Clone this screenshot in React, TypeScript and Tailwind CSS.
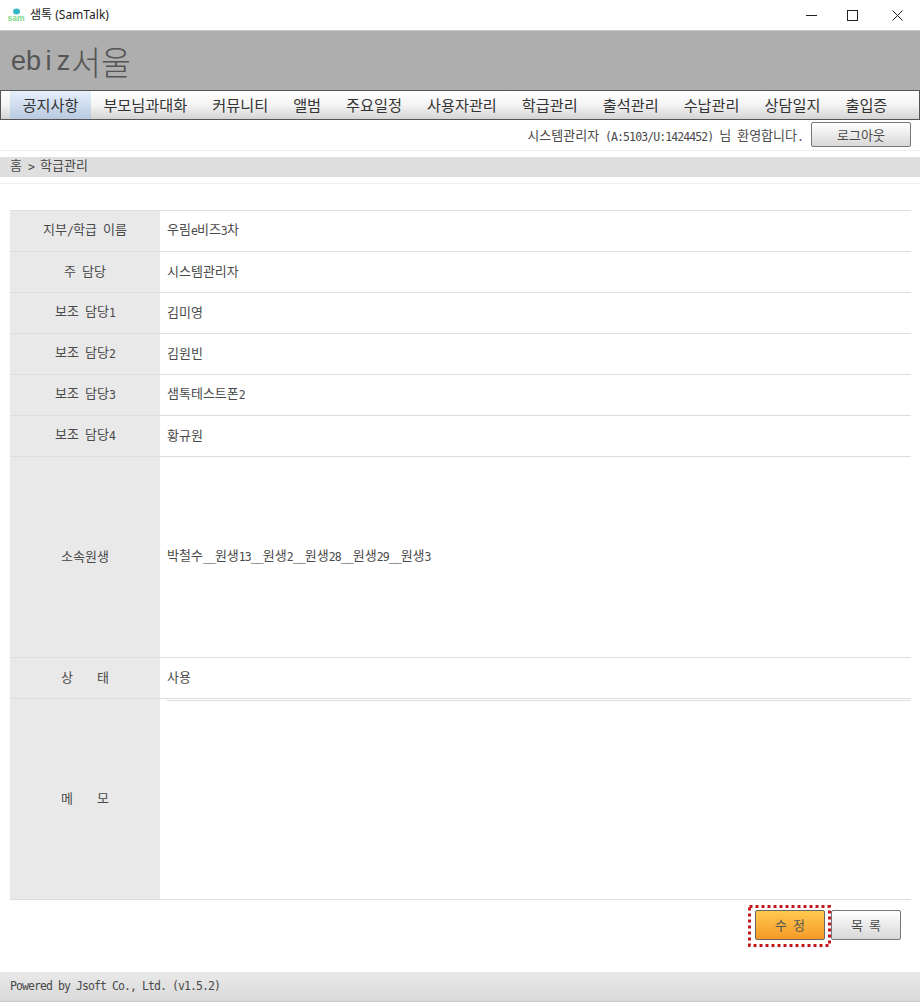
import React from "react";

const KR = "font-['Noto_Sans_CJK_KR',monospace]";

function L({ children }: { children: React.ReactNode }) {
  return <span className="font-['DejaVu_Sans_Mono','Noto_Sans_CJK_KR',monospace] text-[11.5px] tracking-[-0.92px] [word-spacing:0px] align-[-1px]">{children}</span>;
}

const navItems = ["공지사항", "부모님과대화", "커뮤니티", "앨범", "주요일정", "사용자관리", "학급관리", "출석관리", "수납관리", "상담일지", "출입증"];

function Row({ label, h = "h-[41px]", children }: { label: React.ReactNode; h?: string; children?: React.ReactNode }) {
  return (
    <div className={`flex ${h} border-t border-[#dddddd]`}>
      <div className="w-[150px] shrink-0 bg-[#e9e9e9] flex items-center justify-center whitespace-pre text-[13px] text-[#4a4a4a] pb-[3px]"><span>{label}</span></div>
      <div className="flex-1 pl-[7px] flex items-center text-[13px] text-[#4a4a4a] pb-[3px]"><span>{children}</span></div>
    </div>
  );
}

export default function App() {
  return (
    <div className={`w-[920px] h-[1002px] bg-white flex flex-col overflow-hidden [word-spacing:3.1px] ${KR}`}>
      {/* title bar */}
      <div className="h-[30px] flex items-center shrink-0">
        <svg width="18" height="15" viewBox="0 0 18 15" className="ml-[7px]">
          <ellipse cx="9.5" cy="3.5" rx="3.5" ry="3" fill="#35b8c4" />
          <text x="0.5" y="13" fontSize="8.5" fontWeight="700" fill="#7ed98a" fontFamily="Liberation Sans">sam</text>
        </svg>
        <span className="ml-[5px] text-[12px] text-[#222] [word-spacing:0px] font-['Noto_Sans','Noto_Sans_CJK_KR',sans-serif]">샘톡 (SamTalk)</span>
        <div className="ml-auto flex items-center">
          <svg width="11" height="11" viewBox="0 0 11 11" className="mr-[30px]"><path d="M0 5.5h11" stroke="#222" strokeWidth="1" /></svg>
          <svg width="11" height="11" viewBox="0 0 11 11" className="mr-[34px]"><rect x="0.5" y="0.5" width="10" height="10" fill="none" stroke="#222" strokeWidth="1" /></svg>
          <svg width="11" height="11" viewBox="0 0 11 11" className="mr-[17px]"><path d="M0.5 0.5l10 10M10.5 0.5l-10 10" stroke="#222" strokeWidth="1" /></svg>
        </div>
      </div>

      {/* banner */}
      <div className="h-[60px] shrink-0 bg-[#aeaeae] border-t border-[#c8c8c8] flex items-center pl-[11px] pt-[1px] text-[32.6px] font-light text-[#555] leading-none">
        <span className="font-['Liberation_Sans',sans-serif] text-[27px] flex">
          <span className="w-[15px] text-center">e</span>
          <span className="w-[15px] text-center">b</span>
          <span className="w-[15px] text-center">i</span>
          <span className="w-[15px] text-center">z</span>
        </span>
        서울
      </div>

      {/* nav */}
      <div className="h-[30px] shrink-0 flex pl-[9px] border border-[#555] bg-gradient-to-b from-white via-[#f4f4f4] to-[#d4d4d4]">
        {navItems.map((n, i) => (
          <div
            key={n}
            className={`px-[12.5px] pb-[2px] flex items-center text-[15.2px] text-[#333] whitespace-nowrap ${i === 0 ? "bg-gradient-to-b from-[#e6f0fc] to-[#b9c9df]" : ""}`}
          >
            {n}
          </div>
        ))}
      </div>

      {/* welcome */}
      <div className="h-[31px] shrink-0 border-b border-[#eeeeee] flex items-start justify-end pr-[9px] pt-[2px] gap-[8px]">
        <span className="text-[13px] text-[#4a4a4a] leading-[25px] whitespace-pre">시스템관리자 <L>(A:5103/U:1424452)</L> 님 환영합니다<L>.</L></span>
        <button className="w-[100px] h-[25px] rounded-[2px] border border-[#777] bg-gradient-to-b from-white to-[#d8d8d8] text-[13px] text-[#4a4a4a]">로그아웃</button>
      </div>

      {/* breadcrumb */}
      <div className="mt-[6px] h-[20px] shrink-0 bg-[#dfdfdf] flex items-center pl-[10px] pb-[3px] text-[13px] text-[#4a4a4a] whitespace-pre"><span>홈 <L>&gt;</L> 학급관리</span></div>
      <div className="mt-[6px] h-[1px] shrink-0 bg-[#eeeeee]" />

      {/* table */}
      <div className="ml-[10px] mr-[9px] mt-[26px] shrink-0 border-b border-[#dddddd]">
        <Row label={<>지부<L>/</L>학급 이름</>}>우림<L>e</L>비즈<L>3</L>차</Row>
        <Row label="주 담당">시스템관리자</Row>
        <Row label={<>보조 담당<L>1</L></>}>김미영</Row>
        <Row label={<>보조 담당<L>2</L></>}>김원빈</Row>
        <Row label={<>보조 담당<L>3</L></>}>샘톡테스트폰<L>2</L></Row>
        <Row label={<>보조 담당<L>4</L></>}>황규원</Row>
        <Row label="소속원생" h="h-[201px]">
          박철수<L>__</L>원생<L>13__</L>원생<L>2__</L>원생<L>28__</L>원생<L>29__</L>원생<L>3</L>
        </Row>
        <Row label="상    태">사용</Row>
        <div className="flex h-[201px] border-t border-[#dddddd]">
          <div className="w-[150px] shrink-0 bg-[#e9e9e9] flex items-center justify-center whitespace-pre text-[13px] text-[#4a4a4a] pb-[3px]">메    모</div>
          <div className="flex-1 pl-[7px] pt-[1px]"><div className="h-[1px] bg-[#dddddd]" /></div>
        </div>
      </div>

      {/* actions */}
      <div className="mt-[10px] shrink-0 flex justify-end pr-[19px] gap-[6px] text-[13px]">
        <div className="relative">
          <button className="w-[70px] h-[30px] rounded-[2px] border border-[#666] bg-gradient-to-b from-[#ffc94f] to-[#f59a26] text-[#555] whitespace-pre [word-spacing:3.1px]">수 정</button>
          <svg width="83" height="42" viewBox="0 0 83 42" className="absolute left-[-7px] top-[-5px] pointer-events-none">
            <rect x="1.5" y="1.5" width="80" height="39" fill="none" stroke="#c4161c" strokeWidth="3" strokeDasharray="3 3" />
          </svg>
        </div>
        <button className="w-[70px] h-[30px] rounded-[2px] border border-[#777] bg-gradient-to-b from-white to-[#d8d8d8] text-[#4a4a4a] whitespace-pre [word-spacing:3.1px]">목 록</button>
      </div>

      {/* footer */}
      <div className="mt-auto h-[30px] shrink-0 border-t border-[#e6e6e6] border-b-[#c8c8c8] border-b bg-gradient-to-b from-[#e8e8e8] to-[#dadada] flex items-center pl-[10px] text-[13px] text-[#4a4a4a]">
        <L>Powered by Jsoft Co., Ltd. (v1.5.2)</L>
      </div>
    </div>
  );
}
